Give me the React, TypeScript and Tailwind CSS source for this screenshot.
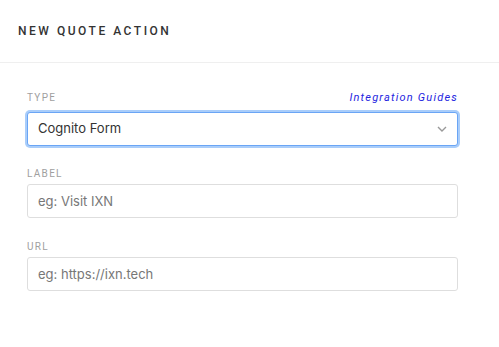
const FIELD_LABEL =
  "block text-[10px] leading-[14px] tracking-[0.13em] text-[#a0a0a0] font-['Roboto',sans-serif]";

const INPUT =
  "w-full h-[34px] rounded-[3px] border border-[#dedede] bg-white px-[10px] text-[13px] text-[#333] placeholder-[#777] outline-none font-['Inter',sans-serif]";

export default function App() {
  return (
    <div className="w-[499px] h-[347px] bg-white">
      {/* Header */}
      <header className="h-[63px] border-b border-[#efefef] flex items-center px-[18px]">
        <h1 className="text-[12px] font-medium tracking-[0.21em] text-[#333] font-['Roboto',sans-serif]">
          NEW QUOTE ACTION
        </h1>
      </header>

      {/* Form */}
      <form className="w-[431px] ml-[27px] pt-[28px]">
        <div className="flex items-center justify-between">
          <label className={FIELD_LABEL}>TYPE</label>
          <a
            href="#"
            className="text-[11px] leading-[14px] italic tracking-[0.11em] text-[#2424e0] font-['Roboto',sans-serif]"
          >
            Integration Guides
          </a>
        </div>
        <div className="relative mt-[7px]">
          <select
            defaultValue="cognito"
            className="appearance-none w-full h-[34px] rounded-[3px] border border-[#6aa5f5] shadow-[0_0_0_2px_#a9cdfa] bg-white px-[10px] text-[13px] text-[#333] outline-none font-['Inter',sans-serif]"
          >
            <option value="cognito">Cognito Form</option>
          </select>
          <svg
            className="absolute right-[11px] top-[14px] pointer-events-none"
            width="10"
            height="6"
            viewBox="0 0 10 6"
            fill="none"
          >
            <polyline points="1,1 5,5 9,1" stroke="#999" strokeWidth="1.4" />
          </svg>
        </div>

        <label className={`${FIELD_LABEL} mt-[21px]`}>LABEL</label>
        <input className={`${INPUT} mt-[3px]`} placeholder="eg: Visit IXN" />

        <label className={`${FIELD_LABEL} mt-[22px]`}>URL</label>
        <input className={`${INPUT} mt-[3px]`} placeholder="eg: https://ixn.tech" />
      </form>
    </div>
  );
}
